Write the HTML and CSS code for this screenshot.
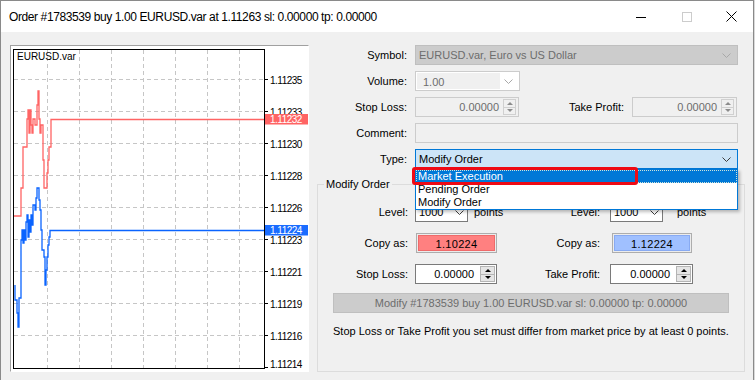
FILE: index.html
```html
<!DOCTYPE html>
<html lang="en">
<head>
    <meta charset="UTF-8">
    <title>Order #1783539</title>
    <link rel="stylesheet" href="styles.css">
</head>
<body>
<div class="window">
    <div class="titlebar">
        <span class="title">Order #1783539 buy 1.00 EURUSD.var at 1.11263 sl: 0.00000 tp: 0.00000</span>
        <div class="controls">
            <span class="ctl"><svg width="10" height="10" viewBox="0 0 10 10"><path d="M0 5.5h10" stroke="#000"/></svg></span>
            <span class="ctl"><svg width="10" height="10" viewBox="0 0 10 10"><rect x=".5" y=".5" width="9" height="9" fill="none" stroke="#cccccc"/></svg></span>
            <span class="ctl close"><svg width="11" height="11" viewBox="0 0 11 11"><path d="M.5.5l10 10M10.5.5l-10 10" stroke="#000"/></svg></span>
        </div>
    </div>

    <div class="content">
        <!-- tick chart -->
        <div class="chart">
            <svg width="297" height="325" viewBox="10 46 297 325">
                <g class="grid">
                    <path d="M46.5 50V368M78.5 50V368M110.5 50V368M142.5 50V368M174.5 50V368M206.5 50V368M238.5 50V368"/>
                    <path d="M13 79.5H263M13 111.5H263M13 143.5H263M13 175.5H263M13 207.5H263M13 239.5H263M13 271.5H263M13 303.5H263M13 335.5H263"/>
                </g>
                <rect x="12.5" y="49.5" width="251" height="319" fill="none" stroke="#000"/>
                <path class="ticks" d="M263 79.5h4M263 111.5h4M263 143.5h4M263 175.5h4M263 207.5h4M263 239.5h4M263 271.5h4M263 303.5h4M263 335.5h4M263 367.5h4"/>
                <g class="axis">
                    <text x="269" y="83.5">1.11235</text>
                    <text x="269" y="115.5">1.11233</text>
                    <text x="269" y="147.5">1.11230</text>
                    <text x="269" y="179.5">1.11228</text>
                    <text x="269" y="211.5">1.11226</text>
                    <text x="269" y="243.5">1.11223</text>
                    <text x="269" y="275.5">1.11221</text>
                    <text x="269" y="307.5">1.11219</text>
                    <text x="269" y="339.5">1.11216</text>
                    <text x="269" y="368">1.11214</text>
                </g>
                <text class="symbol" x="16" y="59.5">EURUSD.var</text>

                <polyline class="ask" points="13,216 20,216 20,188 22,188 22,147 26,147 26,119 27,119 27,110 28,110 28,133 29,133 29,110 30,110 30,125 31,125 31,133 32,133 32,119 34,119 34,125 36,125 36,105 37,105 37,91 38,91 38,119 39,119 39,133 40,133 40,125 42,125 42,160 43,160 43,188 46,188 46,173 47,173 47,160 48,160 48,147 50,147 50,119.5 263,119.5"/>
                <polyline class="bid" points="14,285 14,300 16,300 16,313 17,313 17,327 18,327 18,298 20,298 20,240 21,240 21,230 22,230 22,243 23,243 23,230 24,230 24,240 25,240 25,222 26,222 26,215 27,215 27,237 28,237 28,220 29,220 29,232 30,232 30,215 31,215 31,225 32,225 32,205 34,205 34,210 35,210 35,198 36,198 36,188 38,188 38,200 39,200 39,210 40,210 40,230 41,230 41,250 43,250 43,257 44,257 44,285 45,285 45,270 46,270 46,257 47,257 47,245 48,245 48,237 49,237 49,230.5 263,230.5"/>

                <rect x="264" y="114" width="43" height="10.5" fill="#ff6464"/>
                <text class="tag" x="269" y="123">1.11232</text>
                <rect x="264" y="225" width="43" height="10.5" fill="#1a6cff"/>
                <text class="tag" x="269" y="234">1.11224</text>
            </svg>
        </div>

        <div class="form">
            <div class="top">
                <span class="lbl">Symbol:</span>
                <div class="combo off span3"><span class="val">EURUSD.var, Euro vs US Dollar</span><svg class="chev" width="9" height="5" viewBox="0 0 9 5"><path d="M.5.5l4 4 4-4"/></svg></div>

                <span class="lbl first">Volume:</span>
                <div class="combo vol"><span class="val">1.00</span><svg class="chev" width="9" height="5" viewBox="0 0 9 5"><path d="M.5.5l4 4 4-4"/></svg></div>

                <span class="lbl first">Stop Loss:</span>
                <div class="spin off w104"><span class="num">0.00000</span><span class="btns"><i class="up"></i><i class="dn"></i></span></div>
                <span class="lbl">Take Profit:</span>
                <div class="spin off w105"><span class="num">0.00000</span><span class="btns"><i class="up"></i><i class="dn"></i></span></div>

                <span class="lbl first">Comment:</span>
                <div class="edit off span3"></div>

                <span class="lbl first">Type:</span>
                <div class="combo sel span3"><span class="val">Modify Order</span><svg class="chev" width="9" height="5" viewBox="0 0 9 5"><path d="M.5.5l4 4 4-4"/></svg></div>
            </div>

            <div class="group">
                <div class="group-title">Modify Order</div>

                <div class="grow first-row">
                    <span class="lbl">Level:</span>
                    <div class="pair"><div class="combo lvl"><span class="val">1000</span><svg class="chev" width="9" height="5" viewBox="0 0 9 5"><path d="M.5.5l4 4 4-4"/></svg></div><span class="pts">points</span></div>
                    <span class="lbl">Level:</span>
                    <div class="pair"><div class="combo lvl"><span class="val">1000</span><svg class="chev" width="9" height="5" viewBox="0 0 9 5"><path d="M.5.5l4 4 4-4"/></svg></div><span class="pts wide">points</span></div>
                </div>

                <div class="grow">
                    <span class="lbl">Copy as:</span>
                    <div class="swatch sell"><span>1.10224</span></div>
                    <span class="lbl">Copy as:</span>
                    <div class="swatch buy"><span>1.12224</span></div>
                </div>

                <div class="grow">
                    <span class="lbl">Stop Loss:</span>
                    <div class="spin on w82"><span class="num">0.00000</span><span class="btns"><i class="up"></i><i class="dn"></i></span></div>
                    <span class="lbl">Take Profit:</span>
                    <div class="spin on w83"><span class="num">0.00000</span><span class="btns"><i class="up"></i><i class="dn"></i></span></div>
                </div>

                <div class="action">Modify #1783539 buy 1.00 EURUSD.var sl: 0.00000 tp: 0.00000</div>
                <p class="note">Stop Loss or Take Profit you set must differ from market price by at least 0 points.</p>
            </div>

            <ul class="droplist">
                <li class="hot">Market Execution</li>
                <li>Pending Order</li>
                <li>Modify Order</li>
            </ul>
            <div class="marker"></div>
        </div>
    </div>
</div>
</body>
</html>
```

FILE: styles.css
```css
* {
    box-sizing: border-box;
}
body {
    margin: 0;
    background: #d9d9d9;
    font-family: "Liberation Sans", Arial, sans-serif;
    font-size: 11px;
    color: #000;
}
.window {
    width: 754px;
    height: 380px;
    border: 1px solid #8a8a8a;
    border-bottom: 0;
    background: #f0f0f0;
    overflow: hidden;
}

/* title bar */
.titlebar {
    height: 31px;
    background: #fff;
    display: flex;
    align-items: center;
}
.title {
    padding-left: 8px;
    font-size: 12px;
    letter-spacing: -0.4px;
}
.controls {
    margin-left: auto;
    display: flex;
    height: 100%;
}
.ctl {
    width: 46px;
    display: flex;
    align-items: center;
    justify-content: center;
}
.ctl.close {
    width: 43px;
}

.content {
    display: flex;
    padding: 13px 0 0 9px;
}

/* chart */
.chart {
    width: 299px;
    height: 327px;
    background: #fff;
    border: 1px solid;
    border-color: #a0a0a0 #ffffff #ffffff #a0a0a0;
}
.chart svg {
    display: block;
}
.grid path {
    stroke: #c6c6c6;
    stroke-dasharray: 4 3;
    fill: none;
}
.ticks {
    stroke: #000;
}
.axis text, .tag, .symbol {
    font-family: "Liberation Sans", Arial, sans-serif;
    font-size: 10px;
}
.axis text, .tag {
    letter-spacing: -0.5px;
}
.tag {
    fill: #fff;
}
.ask, .bid {
    fill: none;
    stroke-width: 1.3;
}
.ask {
    stroke: #ff6464;
}
.bid {
    stroke: #0a64ff;
}

/* right form */
.form {
    position: relative;
    width: 428px;
    margin-left: 8px;
}
.top {
    display: grid;
    grid-template-columns: 98px 104px 113px 106px;
    grid-auto-rows: 20px;
    row-gap: 6px;
}
.lbl {
    align-self: center;
    text-align: right;
    padding-right: 8px;
    white-space: nowrap;
}
.lbl.first {
    grid-column: 1;
}
.span3 {
    grid-column: 2 / 5;
}

.combo {
    display: flex;
    align-items: center;
    height: 20px;
    border: 1px solid #7a7a7a;
    background: #fff;
    padding: 0 6px 0 3px;
}
.combo .val {
    flex: 1;
    white-space: nowrap;
}
.chev path {
    fill: none;
    stroke: #3c3c3c;
}
.combo.off {
    background: #cccccc;
    border-color: #bfbfbf;
    color: #6d6d6d;
}
.combo.off .chev path, .combo.vol .chev path {
    stroke: #a8a8a8;
}
.combo.vol {
    width: 105px;
    border-color: #cccccc;
    padding: 1px 6px 1px 1px;
    color: #6d6d6d;
}
.combo.vol .val {
    align-self: stretch;
    background: #f0f0f0;
    padding: 3px 0 0 6px;
    margin-right: 4px;
}
.combo.sel {
    background: #cce4f7;
    border-color: #0078d7;
}
.combo.lvl {
    width: 53px;
    padding: 0 3px 0 3px;
}

.spin {
    display: flex;
    height: 20px;
    border: 1px solid #7a7a7a;
    background: #fff;
}
.spin .num {
    flex: 1;
    text-align: right;
    padding: 3px 5px 0 0;
}
.btns {
    display: flex;
    flex-direction: column;
    width: 15px;
    margin: 1px;
}
.btns i {
    flex: 1;
    display: flex;
    align-items: center;
    justify-content: center;
    background: #e5e5e5;
    border: 1px solid #b4b4b4;
}
.btns i.dn {
    border-top: 0;
}
.btns i::after {
    content: "";
    border-left: 3px solid transparent;
    border-right: 3px solid transparent;
}
.btns i.up::after {
    border-bottom: 3px solid #000;
}
.btns i.dn::after {
    border-top: 3px solid #000;
}
.spin.off {
    background: #f0f0f0;
    border-color: #cccccc;
    color: #6d6d6d;
}
.spin.off .num {
    padding-right: 3px;
}
.spin.off .btns {
    margin: 1px 2px 1px 1px;
    width: 13px;
}
.spin.off .btns i {
    background: #f0f0f0;
    border-color: #d0d0d0;
}
.spin.off .btns i.up::after {
    border-bottom-color: #8c8c8c;
}
.spin.off .btns i.dn::after {
    border-top-color: #8c8c8c;
}
.w104 { width: 104px; }
.w105 { width: 105px; }
.w82 { width: 82px; }
.w83 { width: 83px; }

.edit {
    height: 20px;
    border: 1px solid #cccccc;
    background: #f0f0f0;
}

/* modify order group */
.group {
    margin-top: 15px;
    height: 188px;
    border: 1px solid #dcdcdc;
}
.group-title {
    width: fit-content;
    margin: -7px 0 0 6px;
    padding: 0 2px;
    line-height: 13px;
    background: #f0f0f0;
}
.grow {
    display: grid;
    grid-template-columns: 97px 105px 90px 1fr;
    height: 20px;
    margin-top: 11px;
    align-items: center;
}
.grow .lbl {
    padding-right: 7px;
}
.grow .lbl:nth-of-type(2) {
    padding-right: 10px;
}
.pair {
    display: flex;
    align-items: center;
}
.pts {
    margin-left: 6px;
}
.pts.wide {
    margin-left: 14px;
}

.swatch {
    height: 20px;
    border: 1px solid #adadad;
    padding: 1px;
    background: #ececec;
}
.swatch span {
    display: block;
    height: 100%;
    text-align: center;
    line-height: 16px;
    letter-spacing: 0.3px;
}
.swatch.sell {
    width: 81px;
    margin-left: 1px;
}
.swatch.sell span {
    background: #ff8080;
    border: 1px solid #ef6a6a;
}
.swatch.buy {
    width: 80px;
    margin-left: 2px;
}
.swatch.buy span {
    background: #a0c0ff;
    border: 1px solid #88aaf2;
}

.action {
    width: 396px;
    height: 20px;
    margin: 9px 0 0 15px;
    background: #cccccc;
    border: 1px solid #bfbfbf;
    color: #6d6d6d;
    text-align: center;
    line-height: 18px;
}
.note {
    margin: 11px 0 0 15px;
    line-height: 14px;
}

/* open type list */
.droplist {
    position: absolute;
    left: 98px;
    top: 124px;
    width: 323px;
    margin: 0;
    padding: 0;
    list-style: none;
    background: #fff;
    border: 1px solid #0078d7;
    box-shadow: 2px 2px 3px rgba(0, 0, 0, 0.25);
    z-index: 2;
}
.droplist li {
    height: 13px;
    line-height: 13px;
    padding-left: 2px;
}
.droplist li.hot {
    background: #0078d7;
    color: #fff;
    outline: 1px dotted rgba(255, 255, 220, 0.8);
    outline-offset: -1px;
}
.marker {
    position: absolute;
    left: 95px;
    top: 122px;
    width: 226px;
    height: 18px;
    border: 3px solid #ee0a14;
    border-radius: 3px;
    z-index: 3;
}
```
